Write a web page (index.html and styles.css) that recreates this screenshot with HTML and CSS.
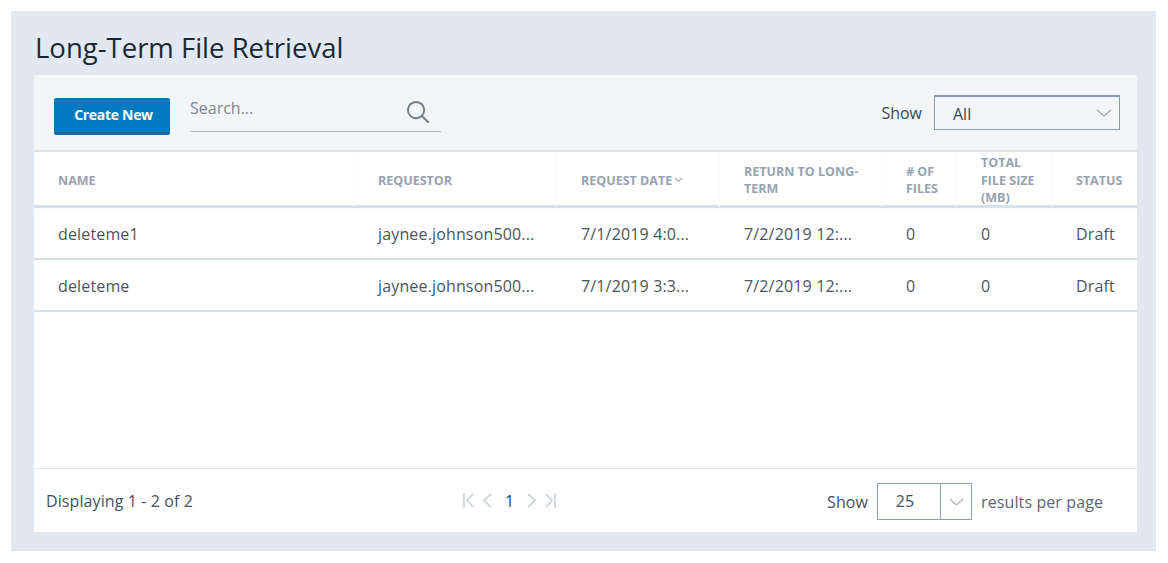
FILE: index.html
```html
<!DOCTYPE html>
<html lang="en">
<head>
<meta charset="utf-8">
<title>Long-Term File Retrieval</title>
<link rel="stylesheet" href="styles.css">
</head>
<body>
<main class="page">
  <h1 class="title">Long-Term File Retrieval</h1>
  <section class="card">
    <div class="toolbar">
      <button class="btn-create" type="button">Create New</button>
      <div class="search">
        <span class="search-text">Search...</span>
        <svg class="search-icon" viewBox="0 0 24 24" width="23" height="23" fill="none" stroke="#6f7c87" stroke-width="2"><circle cx="10.500" cy="10.500" r="8.500"/><path d="M16.500 16.500L23 23" stroke-linecap="round"/></svg>
      </div>
      <div class="filter">
        <span class="filter-label">Show</span>
        <div class="select">
          <span class="select-value">All</span>
          <svg viewBox="0 0 16 8" width="16" height="8" fill="none" stroke="#9aa5b1" stroke-width="1.2"><path d="M1 1l7 6 7-6"/></svg>
        </div>
      </div>
    </div>
    <div class="grid head">
      <div class="th">NAME</div>
      <div class="th">REQUESTOR</div>
      <div class="th">REQUEST DATE<svg class="sort" viewBox="0 0 10 6" width="9" height="6" fill="none" stroke="#8e99a8" stroke-width="1.2"><path d="M1 1l4 3.500L9 1"/></svg></div>
      <div class="th">RETURN TO LONG-TERM</div>
      <div class="th">#&nbsp;OF FILES</div>
      <div class="th">TOTAL FILE SIZE (MB)</div>
      <div class="th">STATUS</div>
    </div>
    <div class="grid row">
      <div class="td">deleteme1</div>
      <div class="td">jaynee.johnson500...</div>
      <div class="td">7/1/2019 4:0...</div>
      <div class="td">7/2/2019 12:...</div>
      <div class="td">0</div>
      <div class="td">0</div>
      <div class="td">Draft</div>
    </div>
    <div class="grid row">
      <div class="td">deleteme</div>
      <div class="td">jaynee.johnson500...</div>
      <div class="td">7/1/2019 3:3...</div>
      <div class="td">7/2/2019 12:...</div>
      <div class="td">0</div>
      <div class="td">0</div>
      <div class="td">Draft</div>
    </div>
    <div class="spacer"></div>
    <div class="footer">
      <div class="count">Displaying 1 - 2 of 2</div>
      <div class="pager">
        <svg viewBox="0 0 11 15" width="11" height="15" fill="none" stroke="#ccd5de" stroke-width="1.800"><path d="M1 0v15M10 1L4 7.500l6 6.500"/></svg>
        <svg viewBox="0 0 10 15" width="10" height="15" fill="none" stroke="#ccd5de" stroke-width="1.800"><path d="M9 1L2 7.500 9 14"/></svg>
        <span class="page-num">1</span>
        <svg viewBox="0 0 10 15" width="10" height="15" fill="none" stroke="#ccd5de" stroke-width="1.800"><path d="M1 1l7 6.500L1 14"/></svg>
        <svg viewBox="0 0 11 15" width="11" height="15" fill="none" stroke="#ccd5de" stroke-width="1.800"><path d="M10 0v15M1 1l6 6.500L1 14"/></svg>
      </div>
      <div class="per-page">
        <span>Show</span>
        <div class="size-select">
          <span class="size-value">25</span>
          <span class="size-arrow"><svg viewBox="0 0 16 8" width="15" height="8" fill="none" stroke="#9aa5b1" stroke-width="1.2"><path d="M1 1l7 6 7-6"/></svg></span>
        </div>
        <span class="results">results per page</span>
      </div>
    </div>
  </section>
</main>
</body>
</html>
```
FILE: styles.css
```css
* { box-sizing: border-box; }
html, body { margin: 0; padding: 0; background: #fff; }
body { font-family: "Open Sans", "Noto Sans", sans-serif; color: #3b4550; }
.page {
  margin: 11px 12px 12px 11px;
  height: 540px;
  background: #e1e8f1;
  padding: 0 19px 19px 23px;
  display: flex;
  flex-direction: column;
}
.title {
  margin: 0;
  height: 64px;
  padding: 18px 0 0 1px;
  font-size: 27.500px;
  line-height: 38px;
  font-weight: 400;
  color: #1a2836;
}
.card { flex: 1; background: #fff; display: flex; flex-direction: column; min-height: 0; }
.toolbar {
  height: 77px;
  background: #f1f6f9;
  border-bottom: 2px solid #dce4ea;
  display: flex;
  align-items: flex-start;
  padding: 23px 17px 0 20px;
}
.btn-create {
  width: 116px;
  height: 37px;
  border: 0;
  border-bottom: 3px solid #1e659e;
  border-radius: 2px;
  background: #007ac1;
  color: #fff;
  font: 700 14px/30px "Open Sans", sans-serif;
  letter-spacing: -0.300px;
  padding: 0 0 1px 3px;
}
.search {
  width: 251px;
  height: 35px;
  margin: -1px 0 0 20px;
  padding-right: 12px;
  border-bottom: 1px solid #b3bac2;
  display: flex;
  justify-content: space-between;
  align-items: flex-start;
}
.search-text { font-size: 16px; line-height: 23px; color: #7d8791; }
.search-icon { margin-top: 3px; }
.filter { margin-left: auto; display: flex; align-items: center; margin-top: -3px; }
.filter-label { font-size: 16px; color: #3b4550; margin-right: 12px; }
.select {
  width: 186px;
  height: 35px;
  border: 1px solid #8a9bb0;
  border-top-width: 2px;
  display: flex;
  align-items: center;
  justify-content: space-between;
  padding: 0 7px 0 18px;
  font-size: 16px;
  color: #3b4550;
}
.select-value { padding-top: 2px; }
.grid {
  display: grid;
  grid-template-columns: 320px 203px 163px 162px 75px 95px 85px;
}
.head {
  height: 56px;
  border-bottom: 3px solid #d6e0ea;
  box-shadow: 0 2px 4px rgba(200, 210, 220, .15);
}
.th {
  padding: 2px 0 0 24px;
  font-size: 12.500px;
  line-height: 17.500px;
  font-weight: 700;
  color: #97a2b2;
  display: flex;
  align-items: center;
  border-right: 1px solid #f8f9fa;
}
.th:nth-child(6) { padding-right: 14px; }
.th:nth-child(7) { border-right: 0; white-space: nowrap; }
.sort { margin-left: 2px; }
.row { height: 52px; border-bottom: 2px solid #d6e0ea; }
.td {
  padding-left: 24px;
  font-size: 16px;
  letter-spacing: .150px;
  line-height: 52px;
  color: #4a545e;
  white-space: nowrap;
}
.spacer { flex: 1; }
.footer {
  height: 64px;
  border-top: 1px solid #e1e8f0;
  display: grid;
  grid-template-columns: 417px auto 1fr;
  align-items: center;
  padding: 0 34px 0 12px;
  font-size: 16px;
  letter-spacing: .100px;
  color: #46505a;
}
.pager { display: flex; align-items: center; gap: 8px; }
.page-num { margin: 0 5px; color: #2f3a45; }
.per-page { display: flex; align-items: center; justify-content: flex-end; padding-top: 2px; }
.size-select {
  width: 95px;
  height: 37px;
  margin: 0 9px;
  border: 1px solid #8f9eb0;
  display: flex;
}
.size-value { flex: 1; text-align: center; line-height: 34px; padding-right: 8px; }
.size-arrow { width: 31px; border-left: 1px solid #8f9eb0; display: flex; align-items: center; justify-content: center; }
.results { color: #5b6570; }
```
